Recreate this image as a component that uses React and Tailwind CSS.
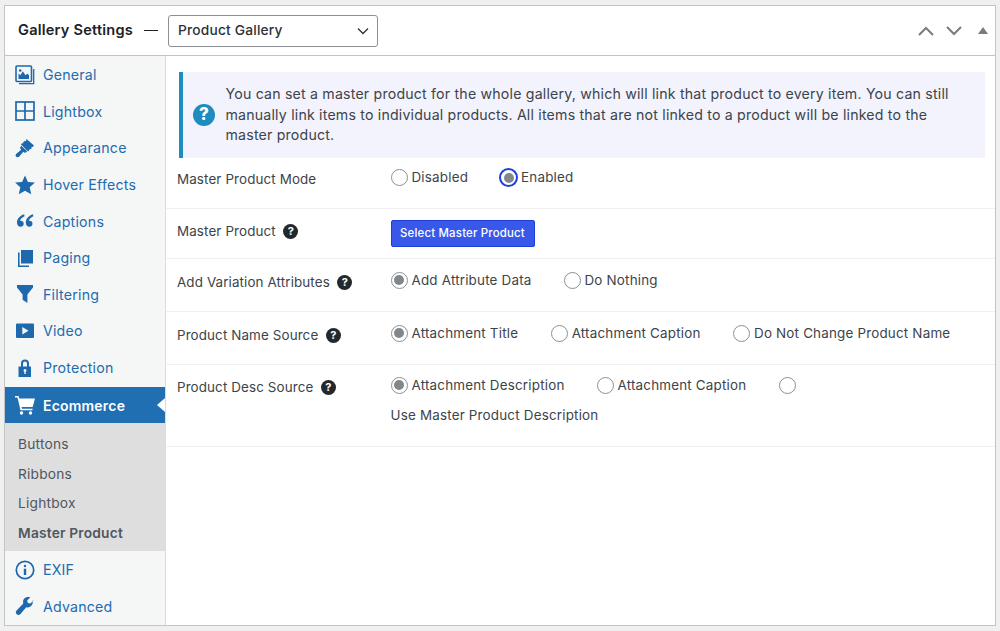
import React from "react";

const c = "#1e68ae";

const icons = {
  General: (
    <svg viewBox="0 0 20 20" className="w-5 h-5" fill="none">
      <path d="M18.700 4v14.700H4" stroke={c} strokeWidth="1.300" />
      <rect x="1" y="1" width="15.500" height="15.500" rx="1" stroke={c} strokeWidth="1.600" />
      <path d="M3.500 14V8.500l2 1.700 2.300-4 2.700 4 1.800-1.500 1.700 1.300V14z" fill={c} />
      <circle cx="5.200" cy="5.500" r="1.300" fill={c} />
    </svg>
  ),
  Lightbox: (
    <svg viewBox="0 0 20 20" className="w-5 h-5" fill="none" stroke={c} strokeWidth="1.700">
      <rect x="1" y="1" width="18" height="18" />
      <path d="M10 1v18M1 10h18" />
    </svg>
  ),
  Appearance: (
    <svg viewBox="0 0 20 20" className="w-5 h-5" fill={c}>
      <path d="M11.500 1l7.500 6.500-1.300 1.500-1.200-.3.200 1.500-1.600 1.400-1-.2 0 1.200-1 1L5.800 6.300 7 5.300l1.200.2-.1-1.200 1.500-1.300 1.300.3z" />
      <path d="M6.200 7.800l6 5.400-2.200 1.800-1.700-1.200-4 4.700c-1 1-2.600 1-3.300.1-.7-.9-.5-2 .4-2.800l4.800-4-1.200-1.800z" />
    </svg>
  ),
  "Hover Effects": (
    <svg viewBox="0 0 20 20" className="w-5 h-5" fill={c}>
      <path d="M10 .5l2.900 6.400 7 .7-5.200 4.700 1.500 6.900-6.200-3.500-6.200 3.500 1.500-6.900L.1 7.600l7-.7z" />
    </svg>
  ),
  Captions: (
    <svg viewBox="0 0 20 20" className="w-5 h-5" fill={c}>
      <path d="M9.200 3.200C5 4.500 2 7.500 2 11.500c0 2.400 1.400 4.300 3.500 4.300 1.800 0 3.200-1.300 3.200-3.100 0-1.700-1.200-3-2.900-3-.3 0-.6.100-.8.100.4-1.700 2.200-3.500 4.500-4.500z" />
      <path d="M18 3.200c-4.200 1.300-7.200 4.300-7.200 8.300 0 2.400 1.400 4.300 3.500 4.300 1.800 0 3.200-1.300 3.200-3.100 0-1.700-1.200-3-2.900-3-.3 0-.6.100-.8.100.4-1.700 2.200-3.500 4.500-4.500z" />
    </svg>
  ),
  Paging: (
    <svg viewBox="0 0 20 20" className="w-5 h-5" fill={c}>
      <rect x="6" y="2" width="12" height="13.500" />
      <path d="M3 4.500h1.600v13H14V19H3z" />
    </svg>
  ),
  Filtering: (
    <svg viewBox="0 0 20 20" className="w-5 h-5" fill={c}>
      <path d="M2 1h16v2.500l-5.600 7V19l-4.800-3.200v-5.300L2 3.500z" />
    </svg>
  ),
  Video: (
    <svg viewBox="0 0 20 20" className="w-5 h-5">
      <rect x="1" y="2.500" width="18" height="14.500" rx="1" fill={c} />
      <path d="M7.300 6v7.500l6.200-3.750z" fill="#f5f6f6" />
    </svg>
  ),
  Protection: (
    <svg viewBox="0 0 20 20" className="w-5 h-5" fill={c}>
      <path fillRule="evenodd" d="M6 8.500V5.500a4 4 0 018 0v3h2V19H3.500V8.500zM8 8.500h4v-3a2 2 0 00-4 0zM10 11a1.500 1.500 0 00-.7 2.800V16h1.400v-2.200A1.500 1.500 0 0010 11z" />
    </svg>
  ),
  Ecommerce: (
    <svg viewBox="0 0 20 20" className="w-[20px] h-[20px]" fill="#fff">
      <path d="M0 1h3.500l.8 2.500H20l-2.300 8.500H6.500l.5 1.800h10.500v1.500H5.500L2.500 2.500H0z" />
      <circle cx="6.500" cy="18" r="1.700" />
      <circle cx="15.500" cy="18" r="1.700" />
    </svg>
  ),
  EXIF: (
    <svg viewBox="0 0 20 20" className="w-5 h-5" fill="none">
      <circle cx="10" cy="10" r="8.700" stroke={c} strokeWidth="1.700" />
      <circle cx="10" cy="6" r="1.200" fill={c} />
      <path d="M8.800 8.700h2.400v6.300H8.800z" fill={c} />
    </svg>
  ),
  Advanced: (
    <svg viewBox="0 0 20 20" className="w-5 h-5" fill={c}>
      <path d="M18.600 4.600l-3.200 3-2.600-.6-.6-2.600 3.100-3.100c-2.300-.8-4.900-.2-6.200 1.500-1.100 1.400-1.300 3-.8 4.600L1.800 14.200c-1.200 1-1.300 2.800-.3 3.900 1 1.200 2.900 1.200 4 0l5.700-6.900c1.600.6 3.500.2 4.900-1.100 1.500-1.400 2-3.500 1.500-5.500z" />
    </svg>
  ),
};

const navTop = ["General", "Lightbox", "Appearance", "Hover Effects", "Captions", "Paging", "Filtering", "Video", "Protection"];

function NavItem({ name }) {
  return (
    <div className="h-[36.6px] flex items-center pl-[10px] gap-[8px] text-[#1e6cb0] text-[14.200px] tracking-[0.2px]">
      <span className="w-5 h-5 flex items-center justify-center shrink-0">{icons[name]}</span>
      <span>{name}</span>
    </div>
  );
}

function Radio({ label, checked, focus, className = "" }) {
  return (
    <label className={`flex items-center ${className}`}>
      <span
        className={`rounded-full bg-white flex items-center justify-center shrink-0 ${
          focus ? "w-[19px] h-[19px] border-2 border-[#1c3fdc] mr-[3px]" : "w-[17px] h-[17px] border border-[#8c8f94] mr-[4px]"
        }`}
      >
        {checked && <span className="w-[10px] h-[10px] rounded-full bg-[#82878c]" />}
      </span>
      {label && <span>{label}</span>}
    </label>
  );
}

function Help() {
  return (
    <span className="w-[15px] h-[15px] rounded-full bg-[#23282d] text-white text-[11px] font-bold flex items-center justify-center ml-[7.500px] tracking-normal">?</span>
  );
}

function Row({ label, help, h, pl, pr, children }) {
  return (
    <div className={`flex border-b border-[#f0f0f1] ${h}`}>
      <div className={`w-[225px] pl-[11.500px] flex items-start shrink-0 tracking-[0.12px] ${pl}`}>
        <span className="flex items-center">
          {label}
          {help && <Help />}
        </span>
      </div>
      <div className={`flex-1 ${pr}`}>{children}</div>
    </div>
  );
}

export default function App() {
  return (
    <div
      className="w-[1000px] h-[631px] bg-[#f0f0f1] pt-[5px] pl-[4px] pr-[4px] pb-[5px] overflow-hidden text-[13.400px] text-[#3c434a] tracking-[0.2px]"
      style={{ fontFamily: "Inter, 'Liberation Sans', sans-serif" }}
    >
      <div className="h-[621px] border border-[#c3c4c7] bg-white flex flex-col">
        <div className="h-[50px] shrink-0 border-b border-[#c3c4c7] flex items-center pl-[13px] pr-[7px]">
          <span className="text-[14.600px] font-semibold text-[#1d2327]">Gallery Settings</span>
          <span className="w-[14px] h-[1.500px] bg-[#1d2327] ml-[11px] mr-[10px]" />
          <div className="w-[210px] h-[32px] border border-[#8c8f94] rounded-[3px] flex items-center justify-between pl-[9px] pr-[7px] text-[13.750px] font-medium text-[#2c3338]">
            <span>Product Gallery</span>
            <svg viewBox="0 0 14 14" className="w-[14px] h-[14px]" fill="none" stroke="#2c3338" strokeWidth="1.300">
              <path d="M2 4.500l5 5 5-5" />
            </svg>
          </div>
          <div className="ml-auto flex items-center gap-[12px]">
            <svg viewBox="0 0 16 10" className="w-[16px] h-[10px]" fill="none" stroke="#787c82" strokeWidth="2">
              <path d="M1 9l7-7 7 7" />
            </svg>
            <svg viewBox="0 0 16 10" className="w-[16px] h-[10px]" fill="none" stroke="#787c82" strokeWidth="2">
              <path d="M1 1l7 7 7-7" />
            </svg>
            <svg viewBox="0 0 10 7" className="w-[10px] h-[7px] ml-[4px]" fill="#787c82">
              <path d="M5 0l5 7H0z" />
            </svg>
          </div>
        </div>
        <div className="flex flex-1 min-h-0">
          <div className="w-[160.500px] shrink-0 bg-[#f5f6f6] border-r border-[#dcdcde] flex flex-col">
            <div className="h-[331.300px] pt-[0.500px]">
              {navTop.map((n) => (
                <NavItem key={n} name={n} />
              ))}
            </div>
            <div className="relative h-[36px] bg-[#1f6fb2] flex items-center pl-[10px] gap-[8px] text-white font-semibold text-[14px]">
              <span className="w-5 h-5 flex items-center justify-center">{icons.Ecommerce}</span>
              <span>Ecommerce</span>
              <span className="absolute right-0 top-[11px] w-0 h-0 border-y-[7px] border-y-transparent border-r-[8px] border-r-white" />
            </div>
            <div className="bg-[#dedede] h-[128px] pt-[6.500px] text-[#50575e] text-[13.750px]">
              <div className="h-[29.600px] flex items-center pl-[13px]">Buttons</div>
              <div className="h-[29.600px] flex items-center pl-[13px]">Ribbons</div>
              <div className="h-[29.600px] flex items-center pl-[13px]">Lightbox</div>
              <div className="h-[29.600px] flex items-center pl-[13px] font-semibold">Master Product</div>
            </div>
            <NavItem name="EXIF" />
            <NavItem name="Advanced" />
          </div>
          <div className="flex-1 min-w-0 pt-[16px]">
            <div className="ml-[13.500px] mr-[10px] h-[86px] bg-[#f3f3fe] border-l-[4px] border-[#1e8cbe] flex items-center pl-[10px] pr-[16px]">
              <span className="w-[22px] h-[22px] rounded-full bg-[#1e8cbe] text-white font-extrabold text-[17px] flex items-center justify-center shrink-0">?</span>
              <p className="ml-[10.500px] leading-[20.500px] text-[14.150px] text-[#3c434a]">
                You can set a master product for the whole gallery, which will link that product to every item. You can still manually link items to individual products. All items that are not linked to a product will be linked to the master product.
              </p>
            </div>
            <Row label="Master Product Mode" h="h-[51px]" pl="pt-[11px]" pr="pt-[10px]">
              <div className="flex items-center h-[19px]">
                <Radio label="Disabled" />
                <Radio label="Enabled" checked focus className="ml-[31px]" />
              </div>
            </Row>
            <Row label="Master Product" help h="h-[50px]" pl="pt-[12px]" pr="pt-[11px]">
              <div className="h-[27px] w-[144px] bg-[#3858e9] border border-[#1c3fdc] rounded-[2px] text-white text-[11.400px] font-medium flex items-center justify-center pt-[1px]">
                Select Master Product
              </div>
            </Row>
            <Row label="Add Variation Attributes" help h="h-[53px]" pl="pt-[13px]" pr="pt-[11px]">
              <div className="flex items-center">
                <Radio label="Add Attribute Data" checked />
                <Radio label="Do Nothing" className="ml-[32px]" />
              </div>
            </Row>
            <Row label="Product Name Source" help h="h-[53px]" pl="pt-[13px]" pr="pt-[11px]">
              <div className="flex items-center">
                <Radio label="Attachment Title" checked />
                <Radio label="Attachment Caption" className="ml-[32.500px]" />
                <Radio label="Do Not Change Product Name" className="ml-[32.500px]" />
              </div>
            </Row>
            <Row label="Product Desc Source" help h="h-[82px]" pl="pt-[12px]" pr="pt-[10px]">
              <div className="flex items-center">
                <Radio label="Attachment Description" checked />
                <Radio label="Attachment Caption" className="ml-[32px]" />
                <Radio className="ml-[33px]" />
              </div>
              <div className="mt-[10px]">Use Master Product Description</div>
            </Row>
          </div>
        </div>
      </div>
    </div>
  );
}
